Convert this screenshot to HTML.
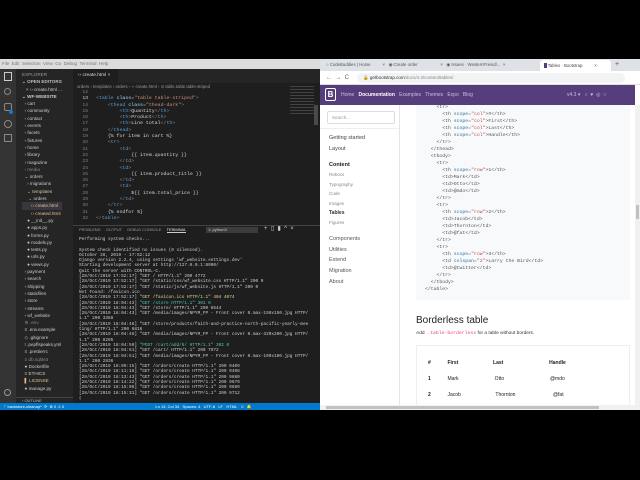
<!DOCTYPE html>
<html><head><style>
*{margin:0;padding:0;box-sizing:border-box}
html,body{width:640px;height:480px;overflow:hidden}
body{background:#000;position:relative;font-family:"Liberation Sans",sans-serif}
.a{position:absolute}
.mono{font-family:"Liberation Mono",monospace}
.ex div{height:7.3px;line-height:7.3px;font-size:4.6px;color:#ccc;white-space:pre}
.code div{height:6.3px;line-height:6.3px;font-size:4.9px;white-space:pre}
.t{color:#569cd6}.s{color:#ce9178}.at{color:#9cdcfe}.w{color:#d4d4d4}.g{color:#808080}
.term div{height:5.3px;line-height:5.3px;font-size:4.4px;color:#ccc;white-space:pre}
.y{color:#dcdc8b}.gr{color:#4ec9b0}
.bc div{height:7px;line-height:7px;font-size:4.8px;color:#555;white-space:pre}
.k{color:#2f6f9f}.v{color:#b84e4e}
.nav div{font-size:5.5px;color:#333;position:absolute;white-space:nowrap}
</style></head><body>
<div class="a" style="left:0;top:59px;width:320px;height:10px;background:#dcdcdc;font-size:4.5px;color:#777;line-height:10px;padding-left:2px;white-space:nowrap">File &nbsp;Edit &nbsp;Selection &nbsp;View &nbsp;Go &nbsp;Debug &nbsp;Terminal &nbsp;Help</div>
<div class="a" style="left:0;top:69px;width:16px;height:334px;background:#333"></div>
<div class="a" style="left:4px;top:72px;width:8px;height:9px;border:1px solid #ccc"></div>
<div class="a" style="left:4px;top:88px;width:7px;height:7px;border:1px solid #888;border-radius:50%"></div>
<div class="a" style="left:4px;top:103px;width:8px;height:8px;border:1px solid #888;border-radius:2px"></div>
<div class="a" style="left:9px;top:110px;width:4px;height:4px;background:#0e7ad1;border-radius:50%"></div>
<div class="a" style="left:4px;top:120px;width:8px;height:8px;border:1px solid #888;border-radius:50%"></div>
<div class="a" style="left:4px;top:134px;width:8px;height:8px;border:1px solid #888"></div>
<div class="a" style="left:4px;top:389px;width:7px;height:7px;border:1px solid #999;border-radius:50%"></div>
<div class="a" style="left:16px;top:69px;width:57px;height:334px;background:#252526"></div>
<div class="a ex" style="left:22px;top:71px">
<div style="color:#999">EXPLORER</div>
<div style="color:#bbb;font-weight:bold">⌄ OPEN EDITORS</div>
<div>   × ‹› create.html ...</div>
<div style="font-weight:bold">⌄ WF-WEBSITE</div>
<div>  › cart</div><div>  › community</div><div>  › contact</div><div>  › events</div><div>  › facets</div><div>  › fixtures</div><div>  › home</div><div>  › library</div><div>  › magazine</div><div style="color:#888">  › media</div><div>  ⌄ orders</div><div>    › migrations</div><div style="color:#c8c8a0">    ⌄ templates</div><div>     ⌄ orders</div><div style="background:#37373d;color:#e2c08d">       ‹› create.html</div><div style="color:#e2c08d">       ‹› created.html</div><div>    ● __init__.py</div><div>    ● apps.py</div><div>    ● forms.py</div><div>    ● models.py</div><div>    ● tests.py</div><div>    ● urls.py</div><div>    ● views.py</div><div>  › payment</div><div>  › search</div><div>  › shipping</div><div>  › staticfiles</div><div>  › store</div><div>  › streams</div><div>  › wf_website</div><div style="color:#888">  ⚙ .env</div><div>  ≡ .env.example</div><div>  ◇ .gitignore</div><div>  ! .pepflspeaks.yml</div><div>  ≡ .prettierrc</div><div style="color:#888">  ≡ db.sqlite3</div><div>  ● Dockerfile</div><div>  ≡ ETHICS</div><div style="color:#e2c08d">  ▌ LICENSE</div><div>  ● manage.py</div>
</div>
<div class="a" style="left:16px;top:397px;width:57px;height:6px;background:#252526;border-top:1px solid #444;font-size:4px;color:#bbb;padding-left:6px;line-height:6px">› OUTLINE</div>
<div class="a" style="left:73px;top:69px;width:247px;height:14px;background:#252526"></div>
<div class="a" style="left:73px;top:69px;width:45px;height:14px;background:#1e1e1e;font-size:4.8px;color:#ddd;line-height:14px;padding-left:5px;white-space:nowrap">‹› create.html ×</div>
<div class="a" style="left:73px;top:83px;width:247px;height:149px;background:#1e1e1e"></div>
<div class="a" style="left:77px;top:83px;font-size:4.3px;color:#999;line-height:7px;white-space:pre">orders › templates › orders › ‹› create.html › ⊙ table.table.table-striped</div>
<div class="a code g" style="left:75px;top:90px;width:13px;text-align:right">
<div>12</div><div style="color:#ccc">13</div><div>14</div><div>15</div><div>16</div><div>17</div><div>18</div><div>19</div><div>20</div><div>21</div><div>22</div><div>23</div><div>24</div><div>25</div><div>26</div><div>27</div><div>28</div><div>29</div><div>30</div><div>31</div><div>32</div></div>
<div class="a mono code w" style="left:96px;top:90px">
<div> </div>
<div><span class="g">&lt;</span><span class="t">table</span> <span class="at">class</span>=<span class="s">"table table-striped"</span><span class="g">&gt;</span></div>
<div>    <span class="g">&lt;</span><span class="t">thead</span> <span class="at">class</span>=<span class="s">"thead-dark"</span><span class="g">&gt;</span></div>
<div>        <span class="g">&lt;</span><span class="t">th</span><span class="g">&gt;</span>Quantity<span class="g">&lt;/</span><span class="t">th</span><span class="g">&gt;</span></div>
<div>        <span class="g">&lt;</span><span class="t">th</span><span class="g">&gt;</span>Product<span class="g">&lt;/</span><span class="t">th</span><span class="g">&gt;</span></div>
<div>        <span class="g">&lt;</span><span class="t">th</span><span class="g">&gt;</span>Line total<span class="g">&lt;/</span><span class="t">th</span><span class="g">&gt;</span></div>
<div>    <span class="g">&lt;/</span><span class="t">thead</span><span class="g">&gt;</span></div>
<div>    {% for item in cart %}</div>
<div>    <span class="g">&lt;</span><span class="t">tr</span><span class="g">&gt;</span></div>
<div>        <span class="g">&lt;</span><span class="t">td</span><span class="g">&gt;</span></div>
<div>            {{ item.quantity }}</div>
<div>        <span class="g">&lt;/</span><span class="t">td</span><span class="g">&gt;</span></div>
<div>        <span class="g">&lt;</span><span class="t">td</span><span class="g">&gt;</span></div>
<div>            {{ item.product_title }}</div>
<div>        <span class="g">&lt;/</span><span class="t">td</span><span class="g">&gt;</span></div>
<div>        <span class="g">&lt;</span><span class="t">td</span><span class="g">&gt;</span></div>
<div>            ${{ item.total_price }}</div>
<div>        <span class="g">&lt;/</span><span class="t">td</span><span class="g">&gt;</span></div>
<div>    <span class="g">&lt;/</span><span class="t">tr</span><span class="g">&gt;</span></div>
<div>    {% endfor %}</div>
<div><span class="g">&lt;/</span><span class="t">table</span><span class="g">&gt;</span></div>
</div>
<div class="a" style="left:290px;top:86px;width:24px;height:30px;opacity:.35;background:repeating-linear-gradient(#888 0 1px,transparent 1px 3px)"></div>
<div class="a" style="left:314px;top:105px;width:4px;height:20px;background:#4a4a4a"></div>
<div class="a" style="left:73px;top:225px;width:247px;height:178px;background:#1e1e1e;border-top:1px solid #444"></div>
<div class="a" style="left:79px;top:225px;font-size:3.9px;color:#999;line-height:9px;white-space:pre">PROBLEMS     OUTPUT     DEBUG CONSOLE     <span style="color:#eee;border-bottom:1px solid #ccc">TERMINAL</span></div>
<div class="a" style="left:206px;top:227px;width:52px;height:6px;background:#3c3c3c;font-size:4px;color:#ccc;line-height:6px;padding-left:2px">1: python3</div>
<div class="a" style="left:264px;top:225px;font-size:6px;color:#ccc;line-height:9px;white-space:pre">+  ▯  ▮  ^  ×</div>
<div class="a mono term" style="left:79px;top:237px">
<div>Performing system checks...</div><div> </div>
<div>System check identified no issues (0 silenced).</div>
<div>October 28, 2019 - 17:52:12</div>
<div>Django version 2.2.4, using settings 'wf_website.settings.dev'</div>
<div>Starting development server at http://127.0.0.1:8000/</div>
<div>Quit the server with CONTROL-C.</div>
<div>[28/Oct/2019 17:52:17] "GET / HTTP/1.1" 200 4772</div>
<div>[28/Oct/2019 17:52:17] "GET /static/css/wf_website.css HTTP/1.1" 200 0</div>
<div>[28/Oct/2019 17:52:17] "GET /static/js/wf_website.js HTTP/1.1" 200 0</div>
<div>Not Found: /favicon.ico</div>
<div>[28/Oct/2019 17:52:17] <span class="y">"GET /favicon.ico HTTP/1.1" 404 4074</span></div>
<div>[28/Oct/2019 18:04:43] <span class="gr">"GET /store HTTP/1.1" 301 0</span></div>
<div>[28/Oct/2019 18:04:43] "GET /store/ HTTP/1.1" 200 8544</div>
<div>[28/Oct/2019 18:04:43] "GET /media/images/NPYM_FP - Front cover 0.max-150x150.jpg HTTP/</div>
<div>1.1" 200 3388</div>
<div>[28/Oct/2019 18:04:48] "GET /store/products/faith-and-practice-north-pacific-yearly-mee</div>
<div>ting/ HTTP/1.1" 200 6816</div>
<div>[28/Oct/2019 18:04:48] "GET /media/images/NPYM_FP - Front cover 0.max-320x200.jpg HTTP/</div>
<div>1.1" 200 8205</div>
<div>[28/Oct/2019 18:04:50] <span class="gr">"POST /cart/add/6/ HTTP/1.1" 302 0</span></div>
<div>[28/Oct/2019 18:04:51] "GET /cart/ HTTP/1.1" 200 7972</div>
<div>[28/Oct/2019 18:04:51] "GET /media/images/NPYM_FP - Front cover 0.max-100x100.jpg HTTP/</div>
<div>1.1" 200 2836</div>
<div>[28/Oct/2019 18:09:15] "GET /orders/create HTTP/1.1" 200 9409</div>
<div>[28/Oct/2019 18:11:18] "GET /orders/create HTTP/1.1" 200 9408</div>
<div>[28/Oct/2019 18:13:43] "GET /orders/create HTTP/1.1" 200 9680</div>
<div>[28/Oct/2019 18:14:22] "GET /orders/create HTTP/1.1" 200 9679</div>
<div>[28/Oct/2019 18:15:08] "GET /orders/create HTTP/1.1" 200 9680</div>
<div>[28/Oct/2019 18:15:31] "GET /orders/create HTTP/1.1" 200 9712</div>
<div>▯</div>
</div>
<div class="a" style="left:0;top:403px;width:320px;height:7px;background:#007acc;font-size:4px;color:#fff;line-height:7px;white-space:pre;padding-left:4px;overflow:hidden">ᚴ backstore-cleanup*  ⟳  ⊗ 0 ⚠ 0                                                                                  Ln 13, Col 34   Spaces: 4   UTF-8   LF   HTML   ☺  🔔</div>
<!-- Chrome -->
<div class="a" style="left:320px;top:59px;width:320px;height:351px;background:#fff"></div>
<div class="a" style="left:320px;top:59px;width:320px;height:12px;background:#dee1e6"></div>
<div class="a" style="left:326px;top:59px;font-size:4.3px;color:#555;line-height:12px;white-space:pre">○ CodeBuddies | Home          ×   ◉ Create order                   ×   ◉ Issues · WesternFriend/...  ×</div>
<div class="a" style="left:540px;top:60px;width:71px;height:11px;background:#fff;border-radius:3px 3px 0 0;font-size:4.3px;color:#444;line-height:11px;padding-left:4px;white-space:pre"><span style="background:#563d7c;color:#563d7c">■</span> Tables · Bootstrap          ×</div>
<div class="a" style="left:615px;top:59px;font-size:7px;color:#555;line-height:12px">+</div>
<div class="a" style="left:320px;top:71px;width:320px;height:14px;background:#fff;border-bottom:1px solid #ddd"></div>
<div class="a" style="left:326px;top:71px;font-size:6px;color:#666;line-height:14px;white-space:pre">←  →  C</div>
<div class="a" style="left:357px;top:73px;width:268px;height:10px;background:#f1f3f4;border-radius:5px;font-size:4.5px;color:#333;line-height:10px;padding-left:6px;white-space:nowrap">🔒 getbootstrap.com<span style="color:#888">/docs/4.3/content/tables/</span></div>
<div class="a" style="left:320px;top:85px;width:315px;height:20px;background:#563d7c"></div>
<div class="a" style="left:325px;top:88px;width:11px;height:13px;border:1px solid #fff;border-radius:2px;color:#fff;font-size:8px;font-weight:bold;text-align:center;line-height:11px">B</div>
<div class="a" style="left:341px;top:85px;font-size:5px;color:#cbbde2;line-height:20px;white-space:pre">Home   <b style="color:#fff">Documentation</b>   Examples   Themes   Expo   Blog</div>
<div class="a" style="left:567px;top:85px;font-size:5px;color:#cbbde2;line-height:20px;white-space:pre">v4.3 ▾   ○  ♥  ◎  ○</div>
<div class="a" style="left:399px;top:105px;width:1px;height:300px;background:#e5e5e5"></div>
<div class="a" style="left:327px;top:111px;width:68px;height:13px;border:1px solid #ddd;border-radius:2px;font-size:4.5px;color:#999;line-height:12px;padding-left:4px">Search...</div>
<div class="a" style="left:320px;top:128px;width:79px;height:1px;background:#eee"></div>
<div class="nav">
<div style="top:135px;left:329px;color:#444">Getting started</div>
<div style="top:146px;left:329px;color:#444">Layout</div>
<div style="top:162px;left:329px;font-weight:bold;color:#222">Content</div>
<div style="top:172px;left:329px;font-size:4.6px;color:#888">Reboot</div>
<div style="top:182px;left:329px;font-size:4.6px;color:#888">Typography</div>
<div style="top:191px;left:329px;font-size:4.6px;color:#888">Code</div>
<div style="top:201px;left:329px;font-size:4.6px;color:#888">Images</div>
<div style="top:210px;left:329px;font-size:5px;font-weight:bold;color:#333">Tables</div>
<div style="top:220px;left:329px;font-size:4.6px;color:#888">Figures</div>
<div style="top:236px;left:329px;color:#555">Components</div>
<div style="top:247px;left:329px;color:#555">Utilities</div>
<div style="top:257px;left:329px;color:#555">Extend</div>
<div style="top:268px;left:329px;color:#555">Migration</div>
<div style="top:279px;left:329px;color:#555">About</div>
</div>
<div class="a" style="left:416px;top:105px;width:214px;height:195px;background:#f8f9fa"></div>
<div class="a mono bc" style="left:425px;top:104px">
<div>    &lt;tr&gt;</div>
<div>      &lt;th <span class="k">scope</span>=<span class="v">"col"</span>&gt;#&lt;/th&gt;</div>
<div>      &lt;th <span class="k">scope</span>=<span class="v">"col"</span>&gt;First&lt;/th&gt;</div>
<div>      &lt;th <span class="k">scope</span>=<span class="v">"col"</span>&gt;Last&lt;/th&gt;</div>
<div>      &lt;th <span class="k">scope</span>=<span class="v">"col"</span>&gt;Handle&lt;/th&gt;</div>
<div>    &lt;/tr&gt;</div>
<div>  &lt;/thead&gt;</div>
<div>  &lt;tbody&gt;</div>
<div>    &lt;tr&gt;</div>
<div>      &lt;th <span class="k">scope</span>=<span class="v">"row"</span>&gt;1&lt;/th&gt;</div>
<div>      &lt;td&gt;Mark&lt;/td&gt;</div>
<div>      &lt;td&gt;Otto&lt;/td&gt;</div>
<div>      &lt;td&gt;@mdo&lt;/td&gt;</div>
<div>    &lt;/tr&gt;</div>
<div>    &lt;tr&gt;</div>
<div>      &lt;th <span class="k">scope</span>=<span class="v">"row"</span>&gt;2&lt;/th&gt;</div>
<div>      &lt;td&gt;Jacob&lt;/td&gt;</div>
<div>      &lt;td&gt;Thornton&lt;/td&gt;</div>
<div>      &lt;td&gt;@fat&lt;/td&gt;</div>
<div>    &lt;/tr&gt;</div>
<div>    &lt;tr&gt;</div>
<div>      &lt;th <span class="k">scope</span>=<span class="v">"row"</span>&gt;3&lt;/th&gt;</div>
<div>      &lt;td <span class="k">colspan</span>=<span class="v">"2"</span>&gt;Larry the Bird&lt;/td&gt;</div>
<div>      &lt;td&gt;@twitter&lt;/td&gt;</div>
<div>    &lt;/tr&gt;</div>
<div>  &lt;/tbody&gt;</div>
<div>&lt;/table&gt;</div>
</div>
<div class="a" style="left:416px;top:315px;font-size:10px;color:#222;white-space:nowrap">Borderless table</div>
<div class="a" style="left:416px;top:331px;font-size:4.8px;color:#333;white-space:pre">Add  <span style="font-family:'Liberation Mono',monospace;color:#e83e8c">.table-borderless</span> for a table without borders.</div>
<div class="a" style="left:416px;top:345px;width:214px;height:62px;border:1px solid #eee;border-bottom:none"></div>
<div class="a" style="left:428px;top:355px;font-size:5px;color:#222;white-space:pre;line-height:16px"><b>#            First                         Last                                 Handle</b><br><b>1</b>            Mark                          Otto                                 @mdo<br><b>2</b>            Jacob                         Thornton                           @fat</div>
<div class="a" style="left:635px;top:105px;width:5px;height:300px;background:#f1f1f1"></div>
<div class="a" style="left:636px;top:205px;width:3px;height:14px;background:#c1c1c1"></div>
<div class="a" style="left:320px;top:405px;width:320px;height:5px;background:#f1f1f1"></div>
<div class="a" style="left:326px;top:406px;width:273px;height:3px;background:#c1c1c1"></div>
</body></html>
